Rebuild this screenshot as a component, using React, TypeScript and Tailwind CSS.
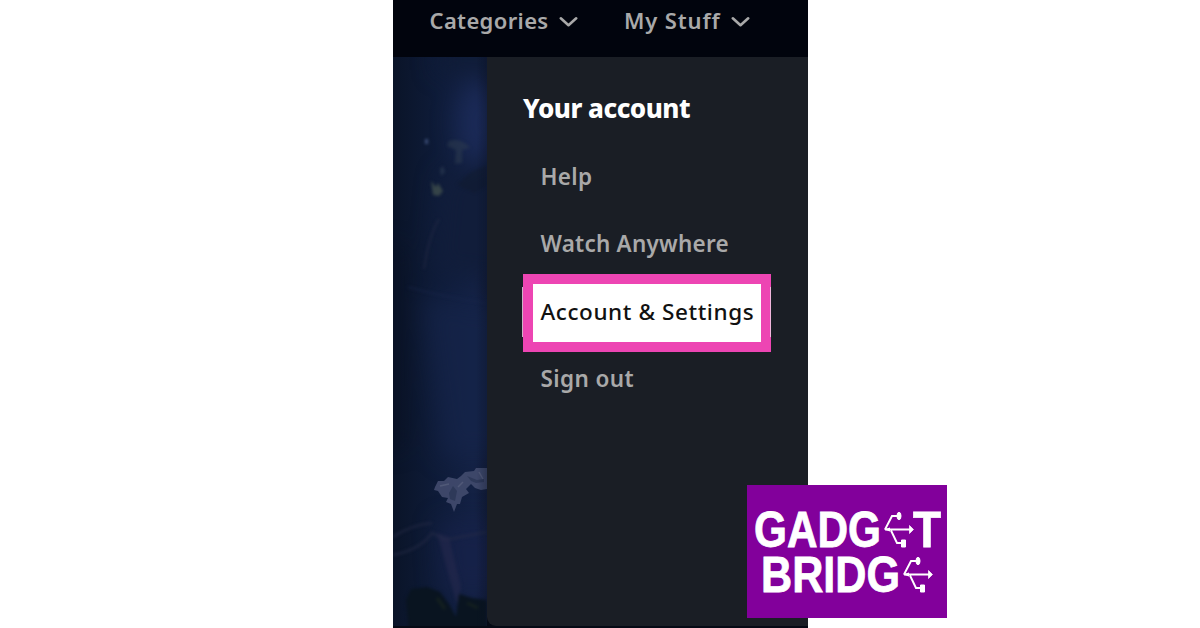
const navItems = [
  { label: "Categories", className: "tracking-[0.35px]" },
  { label: "My Stuff", className: "tracking-[0.85px]" }
];

function Chevron() {
  return (
    <svg viewBox="0 0 19 12" className="mt-[4px] h-[12px] w-[19px]" aria-hidden="true">
      <path d="M1.8 2.3L9.5 9.2L17.2 2.3" fill="none" stroke="currentColor" strokeWidth="2.6" strokeLinecap="round" strokeLinejoin="round" />
    </svg>
  );
}

function Backdrop() {
  return (
    <svg viewBox="0 0 94 571" className="h-[571px] w-[94px] shrink-0" aria-hidden="true">
      <defs>
        <linearGradient id="night" x1="0" x2="1" y1="0" y2="0">
          <stop offset="0" stopColor="#0a1428" />
          <stop offset="0.45" stopColor="#0e1b38" />
          <stop offset="0.85" stopColor="#132144" />
          <stop offset="1" stopColor="#121d3b" />
        </linearGradient>
        <linearGradient id="edge" x1="0" x2="1" y1="0" y2="0">
          <stop offset="0" stopColor="#0a1122" stopOpacity="0" />
          <stop offset="1" stopColor="#0a1122" stopOpacity="0.6" />
        </linearGradient>
        <filter id="soft" filterUnits="userSpaceOnUse" x="-60" y="-60" width="214" height="700" colorInterpolationFilters="sRGB">
          <feGaussianBlur stdDeviation="12" />
        </filter>
        <filter id="fine" filterUnits="userSpaceOnUse" x="-20" y="-20" width="134" height="620" colorInterpolationFilters="sRGB">
          <feGaussianBlur stdDeviation="1.6" />
        </filter>
        <filter id="fringe" filterUnits="userSpaceOnUse" x="30" y="400" width="80" height="70" colorInterpolationFilters="sRGB">
          <feGaussianBlur stdDeviation="0.7" />
        </filter>
      </defs>
      <rect width="94" height="571" fill="url(#night)" />
      <g filter="url(#soft)">
        <ellipse cx="86" cy="66" rx="22" ry="40" fill="#1c2c5b" opacity="0.85" />
        <path d="M45 -10H110V14H45Z" fill="#0f1b35" />
        <path d="M50 118L120 100V225L40 215Z" fill="#111d3a" />
        <path d="M30 240L120 250V400H50Z" fill="#162449" opacity="0.75" />
        <path d="M-20 190H8V390H-20Z" fill="#081022" opacity="0.7" />
        <path d="M45 465H110V535H50Z" fill="#17224a" opacity="0.75" />
      </g>
      <g filter="url(#fine)">
        <path d="M56 84Q68 80 77 91L69 93V106L62 107L63 93L54 89Z" fill="#303d50" opacity="0.5" />
        <path d="M38 124L43 130L45 126L50 134L46 139L40 138Z" fill="#43514d" opacity="0.75" />
        <path d="M47 112L50 109L52 115L48 119Z" fill="#34445a" opacity="0.5" />
        <path d="M64 128L78 115L94 108V128L82 136Z" fill="#101a2e" opacity="0.5" />
        <path d="M32 82H35V87H32Z" fill="#465985" opacity="0.8" />
        <path d="M46 162Q36 178 31 212" stroke="#252b46" strokeWidth="1.5" fill="none" opacity="0.7" />
        <path d="M15 230Q50 240 94 246" stroke="#1b294d" strokeWidth="2" fill="none" opacity="0.4" />
        <path d="M0 480Q18 468 39 466M0 498Q27 493 39 476L52 483L94 475" stroke="#272b47" strokeWidth="2.5" fill="none" opacity="0.55" />
        <path d="M44 476L56 480L68 530L64 548Z" fill="#272a4e" opacity="0.5" />
        <path d="M13 543L18 532L34 530L47 535L56 547L63 560L66 537L79 541L94 543V575H16Z" fill="#091420" />
        <path d="M44 541L52 552M74 546L85 551" stroke="#14201f" strokeWidth="3" />
      </g>
      <g filter="url(#fringe)">
        <path
          d="M42 430L45 424L51 424L55 420L64 422L68 419L72 415L81 414L83 411L94 411V432L88 433L82 431L78 427L73 432L76 436L69 440L67 447L64 447L61 455L58 447L53 445L55 441L49 440L45 434L41 433Z"
          fill="#434b6e"
          opacity="0.9"
        />
        <path d="M56 436L60 429L64 434L62 444L57 442ZM74 419L84 423L91 422V425L83 426L78 424Z" fill="#263252" opacity="0.65" />
        <path d="M47 429L56 427M65 430L70 425M86 415L90 422" stroke="#626985" strokeWidth="1.5" opacity="0.55" />
      </g>
      <rect x="84" width="10" height="571" fill="url(#edge)" opacity="0.5" />
      <path d="M0 569H94V571H0Z" fill="#050a15" />
    </svg>
  );
}

function Trident({ x, y }: { x: number; y: number }) {
  return (
    <g transform={`translate(${x} ${y})`} stroke="white" strokeWidth="1.9" fill="none">
      <path d="M1 17.5H26M1 17.5L8 4H13M7 18.5L13 31H18" />
      <path d="M0 17.5L6 15.5V19.5Z" fill="white" stroke="none" />
      <ellipse cx="15" cy="4" rx="2" ry="3.7" fill="white" strokeWidth="1" />
      <path d="M25.5 13.5L29.5 17.5L25.5 21.5Z" fill="white" strokeWidth="0.7" />
      <path d="M17.5 28H21.5V35H17.5Z" fill="white" strokeWidth="1" />
    </g>
  );
}

const logoWords = [
  { text: "GADG", x: 7, y: 62, width: 127 },
  { text: "T", x: 166, y: 62, width: 28 },
  { text: "BRIDG", x: 14, y: 107, width: 139 }
];

function Logo() {
  return (
    <div className="absolute left-[747px] top-[485px] h-[133px] w-[200px] bg-[#82009b]">
      <svg viewBox="0 0 200 133" className="h-full w-full" aria-label="Gadget Bridge">
        {logoWords.map((word) => (
          <text
            key={word.text}
            x={word.x}
            y={word.y}
            textLength={word.width}
            lengthAdjust="spacingAndGlyphs"
            fill="white"
            stroke="white"
            strokeWidth="0.8"
            className="font-['Liberation_Sans',sans-serif] text-[50.5px] font-bold"
          >
            {word.text}
          </text>
        ))}
        <Trident x={137} y={27} />
        <Trident x={156} y={72} />
      </svg>
    </div>
  );
}

export default function App() {
  return (
    <main className="relative h-[628px] w-[1200px] overflow-hidden bg-white font-['Noto_Sans',sans-serif]">
      <div className="ml-[393px] w-[415px] bg-[#050a15]">
        <header className="flex h-[57px] gap-[46px] bg-[#01040d] pl-[36.5px] text-[22px] font-semibold text-[#a9a9a9]">
          {navItems.map((item) => (
            <div key={item.label} className="flex h-[40px] items-center gap-[10.5px]">
              <span className={item.className}>{item.label}</span>
              <Chevron />
            </div>
          ))}
        </header>

        <div className="flex h-[571px]">
          <Backdrop />
          <aside className="h-[569px] flex-1 rounded-bl-[9px] bg-[#1a1e25] pl-[36px] pt-[33px] text-[#a9a9a9]">
            <h1 className="whitespace-nowrap text-[26px] font-extrabold leading-[36px] tracking-[-0.5px] text-white">Your account</h1>
            <nav className="mt-[16px] flex flex-col whitespace-nowrap text-[22.5px] font-semibold tracking-[0.3px]">
              <a className="flex h-[68px] items-center pl-[17.5px] pt-[2px]">Help</a>
              <a className="flex h-[64px] items-center pl-[17.5px] pt-[3px] tracking-[0.22px]">Watch Anywhere</a>
              <a className="relative flex h-[78px] w-[248px] items-center border-[10px] border-[#ed45b3] bg-white pb-[2px] pl-[7.5px] font-medium tracking-[0.58px] text-[#111]">
                <span className="absolute -left-[11px] top-[3px] h-[50px] w-px bg-[#c9b3c5]" />
                Account &amp; Settings
                <span className="absolute -right-[10px] top-[3px] h-[50px] w-px bg-[#f0b5dc]" />
              </a>
              <a className="flex h-[52px] items-center pl-[17.5px] pt-[2px] tracking-[0.4px]">Sign out</a>
            </nav>
          </aside>
        </div>
      </div>
      <Logo />
    </main>
  );
}
